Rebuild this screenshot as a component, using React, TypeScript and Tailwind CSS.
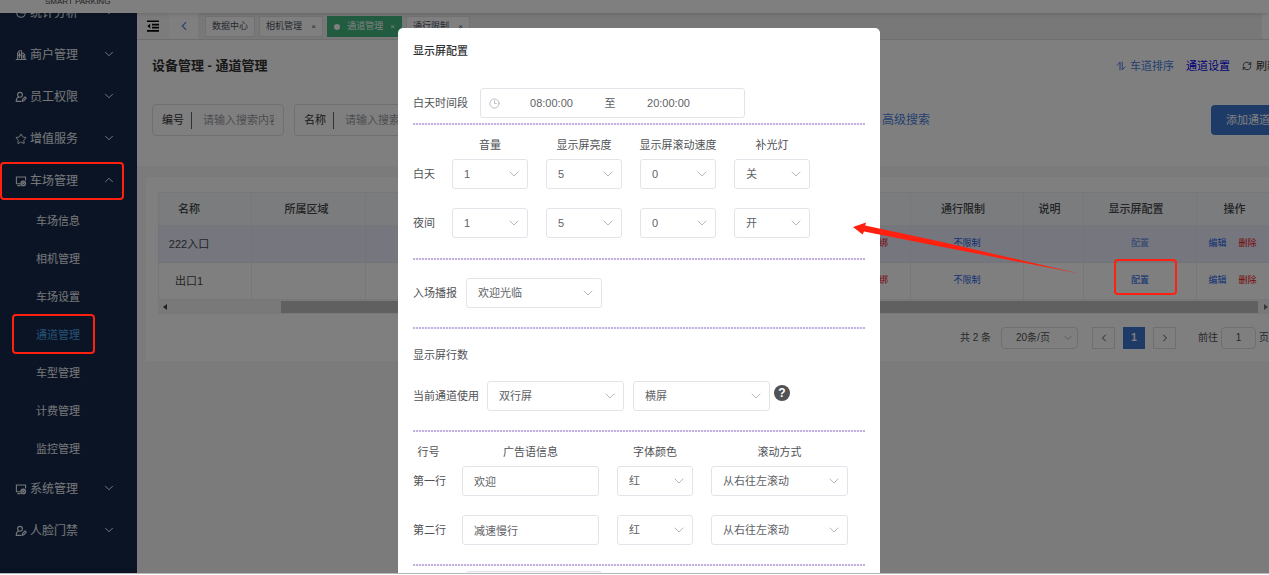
import { ChevronDown, ChevronLeft, ChevronRight, ChevronUp, Clock3, RefreshCw, Star } from 'lucide-react';
import React from 'react';

const iconProps = {
  className: 'size-3 shrink-0',
  viewBox: '0 0 12 12',
  fill: 'none',
  stroke: 'currentColor',
  strokeWidth: 1.1,
  strokeLinejoin: 'round' as const,
  strokeLinecap: 'round' as const,
};

const StatsIcon = () => (
  <svg {...iconProps}>
    <circle cx="6" cy="6" r="4.3" />
    <path d="M6 1.7V6h4.3" />
  </svg>
);

const ShopIcon = () => (
  <svg {...iconProps}>
    <path d="M2.6 10V4L4.4 1.8h2.2V10M6.6 4.2h1.6l1.6 1.6V10M1.2 10.5h9.8" />
    <path d="M4.5 4v4.6M3.6 6.2h2M8.3 6.4v2.4" strokeWidth="1.3" />
  </svg>
);

const StaffIcon = () => (
  <svg {...iconProps}>
    <circle cx="5" cy="3.8" r="2.4" />
    <path d="M3.6 6C1.8 6.6 1.2 8 1.2 10.4h4.6M7.2 10.4l.3-1.8L10 5.9l1.2 1.2-2.5 2.7z" />
  </svg>
);

const MonitorIcon = () => (
  <svg {...iconProps}>
    <path d="M5 8.8H1.4V2h9.2v3M2.8 10.6H5" />
    <circle cx="8.2" cy="8.4" r="2.2" strokeWidth="1.4" />
    <circle cx="8.2" cy="8.4" r=".6" />
  </svg>
);

const StarIcon = () => <Star className="size-3 shrink-0" strokeWidth={2} />;

const menu = [
  { label: '统计分析', icon: StatsIcon },
  { label: '商户管理', icon: ShopIcon },
  { label: '员工权限', icon: StaffIcon },
  { label: '增值服务', icon: StarIcon },
  {
    label: '车场管理',
    icon: MonitorIcon,
    children: ['车场信息', '相机管理', '车场设置', '通道管理', '车型管理', '计费管理', '监控管理'],
  },
  { label: '系统管理', icon: MonitorIcon },
  { label: '人脸门禁', icon: StaffIcon },
];

const Sidebar = () => (
  <aside className="w-[137px] shrink-0 overflow-hidden bg-[#16294b] text-[#eceef2]">
    <nav className="-mt-[21px]">
      {menu.map(({ label, icon: Icon, children }) => (
        <div key={label}>
          <a className="relative flex h-[42px] items-center pl-[15px] pr-[21px] text-xs" href="#">
            <Icon />
            <span className="ml-[3px] flex-1">{label}</span>
            {children ? (
              <ChevronUp className="mb-0.5 size-3.5" strokeWidth={1.7} />
            ) : (
              <ChevronDown className="mb-0.5 size-3.5" strokeWidth={1.7} />
            )}
            {children && (
              <span className="absolute inset-y-0.5 left-0 right-[13px] z-20 rounded-sm border-2 border-[#ff2010]" />
            )}
          </a>
          {children?.map((child) => (
            <a
              key={child}
              className={
                child === '通道管理'
                  ? 'relative flex h-[38px] items-center pl-9 text-[11px] text-[#4da3e6]'
                  : 'flex h-[38px] items-center pl-9 text-[11px]'
              }
              href="#"
            >
              {child}
              {child === '通道管理' && (
                <span className="absolute -top-0.5 bottom-0 left-3 right-[42px] z-20 rounded-sm border-2 border-[#ff2010]" />
              )}
            </a>
          ))}
        </div>
      ))}
    </nav>
  </aside>
);

const TabsBar = () => (
  <div className="flex h-[27px] shrink-0 items-stretch border-b border-[#dcdcdc] bg-[#f0f0f0] text-[#495060]">
    <button aria-label="折叠菜单" className="flex w-8 items-center justify-center bg-[#f8f8f8] text-black">
      <svg className="size-3" fill="none" stroke="currentColor" strokeWidth="1.6" viewBox="0 0 12 12">
        <path d="M0 1.2h12M5 4.6h7M5 7.6h7M0 10.9h12" />
        <path d="M3.2 3.8v4.6L.4 6.1z" fill="currentColor" stroke="none" />
      </svg>
    </button>
    <button aria-label="向左" className="flex w-[29px] items-center justify-center bg-white text-[#5a8be0]">
      <ChevronLeft className="size-3.5" strokeWidth={2} />
    </button>
    <div className="ml-[7px] flex flex-1 items-center gap-1 pt-px text-[9px]">
      <a className="flex h-[21px] w-[50px] items-center justify-center border border-[#e4e4e4] bg-white" href="#">
        数据中心
      </a>
      <a className="flex h-[21px] w-16 items-center justify-between border border-[#e4e4e4] bg-white px-1.5" href="#">
        相机管理<span className="text-[8px]">×</span>
      </a>
      <a className="flex h-[21px] w-[75px] items-center justify-between bg-[#42b983] px-[7px] text-white" href="#">
        <span className="size-1.5 rounded-full bg-white" />
        通道管理<span className="text-[8px]">×</span>
      </a>
      <a className="flex h-[21px] w-16 items-center justify-between border border-[#e4e4e4] bg-white px-1.5" href="#">
        通行限制<span className="text-[8px]">×</span>
      </a>
    </div>
    <div className="w-[7px] bg-white" />
  </div>
);

const SearchBox = ({ label }: { label: string }) => (
  <label className="flex h-8 w-[132px] items-center rounded border border-[#dcdfe6] px-[9px] text-[11px] text-[#303133]">
    <span className="shrink-0">{label}</span>
    <span className="mx-[7px] h-[17px] w-px shrink-0 bg-[#606266]" />
    <input className="ml-1 w-full min-w-0 placeholder:text-[#9a9da3]" placeholder="请输入搜索内容" type="text" />
  </label>
);

const rows = [
  { name: '222入口', active: true },
  { name: '出口1', active: false },
];

const ChannelTable = () => (
  <table className="w-full table-fixed border-collapse text-[11px] text-[#45484d]">
    <colgroup>
      <col className="w-[93px]" />
      <col className="w-[114px]" />
      <col />
      <col className="w-[113px]" />
      <col className="w-[60px]" />
      <col className="w-[113px]" />
      <col className="w-[92px]" />
    </colgroup>
    <thead>
      <tr className="h-[33px] bg-[#f7f8fa] [&>th]:border [&>th]:border-[#ebeef5] [&>th]:font-medium">
        <th className="pr-8">名称</th>
        <th className="pr-1">所属区域</th>
        <th />
        <th className="pr-2">通行限制</th>
        <th className="pr-2">说明</th>
        <th className="pr-2">显示屏配置</th>
        <th className="pr-4">操作</th>
      </tr>
    </thead>
    <tbody>
      {rows.map((row) => (
        <tr
          key={row.name}
          className={
            row.active
              ? 'h-[37px] bg-[#ebedfc] text-center [&>td]:border [&>td]:border-[#e3e6f2]'
              : 'h-[37px] text-center [&>td]:border [&>td]:border-[#ebeef5]'
          }
        >
          <td className="pr-8">{row.name}</td>
          <td />
          <td className="pr-[22px] text-right text-[9px] text-[#f01010]">
            <a href="#">解绑</a>
          </td>
          <td className="text-[9px] text-[#1a5ce6]">
            <a href="#">不限制</a>
          </td>
          <td />
          <td className={row.active ? 'text-[9px] text-[#5a8ae0]' : 'relative text-[9px] text-[#1a5ce6]'}>
            <a href="#">配置</a>
            {!row.active && (
              <span className="absolute -top-1 bottom-1 left-[30px] right-[19px] z-20 rounded-sm border-2 border-[#ff2010]" />
            )}
          </td>
          <td className="pr-5 text-[9px]">
            <a className="text-[#1a5ce6]" href="#">
              编辑
            </a>
            <a className="ml-3 text-[#f01010]" href="#">
              删除
            </a>
          </td>
        </tr>
      ))}
    </tbody>
  </table>
);

const ScrollBar = () => (
  <div className="flex h-3.5 items-center bg-[#f3f3f3] pr-[21px] text-[#404040]">
    <span className="ml-[5px] border-y-[3px] border-r-4 border-y-transparent border-r-current" />
    <span className="ml-[114px] h-3 flex-1 bg-[#c1c1c1]" />
    <span className="ml-1.5 border-y-[3px] border-l-4 border-y-transparent border-l-current text-[#707070]" />
  </div>
);

const Pagination = () => (
  <div className="flex h-[47px] items-center justify-end pr-5 text-[10px] text-[#505256]">
    <span>共 2 条</span>
    <div className="relative ml-2.5 h-[22px] w-[77px]">
      <select aria-label="每页条数" className="size-full appearance-none rounded-sm border border-[#dcdfe6] pl-3.5">
        <option>20条/页</option>
      </select>
      <ChevronDown className="pointer-events-none absolute right-1 top-[5px] size-3 text-[#a0a3a9]" strokeWidth={1.5} />
    </div>
    <button aria-label="上一页" className="ml-3.5 flex h-[22px] w-[23px] items-center justify-center border border-[#dcdfe6]">
      <ChevronLeft className="size-3" />
    </button>
    <button className="ml-2 h-[22px] w-[22px] bg-[#3c77d0] font-bold text-white">1</button>
    <button aria-label="下一页" className="ml-2 flex h-[22px] w-[23px] items-center justify-center border border-[#dcdfe6]">
      <ChevronRight className="size-3" />
    </button>
    <label className="ml-[22px] flex items-center gap-[3px]">
      前往
      <input className="h-[22px] w-[35px] rounded-sm border border-[#dcdfe6] text-center" defaultValue="1" />页
    </label>
  </div>
);

const ChannelPage = () => (
  <main className="flex-1 overflow-hidden bg-[#f6f6f6]">
    {/* the page is a little wider than its frame and runs off to the right */}
    <div className="w-[calc(100%+20px)]">
      <section className="h-[126px] bg-white pl-[15px]">
        <div className="flex h-[52px] items-center justify-between pr-[11px] text-[11px]">
          <h1 className="text-[13px] font-bold text-[#303133]">设备管理 - 通道管理</h1>
          <div className="flex items-center gap-3">
            <a className="flex items-center gap-1 text-[#4a7fe0]" href="#">
              <svg className="size-2.5" fill="none" stroke="currentColor" viewBox="0 0 10 10">
                <path d="M4 9.4V1L1 4.4M6.2.6V9L9.2 5.6" />
              </svg>
              车道排序
            </a>
            <a className="text-[#0000ee]" href="#">
              通道设置
            </a>
            <button className="flex items-center gap-1 text-[#303133]">
              <RefreshCw className="size-2.5" />
              刷新
            </button>
          </div>
        </div>
        <div className="mt-3 flex items-center">
          <SearchBox label="编号" />
          <div className="ml-2.5">
            <SearchBox label="名称" />
          </div>
          <a className="ml-[456px] text-xs text-[#4a7fe0]" href="#">
            高级搜索
          </a>
          <button className="ml-auto h-[30px] w-[78px] rounded-sm bg-[#3c77d0] pl-[15px] text-left text-[11px] text-white">
            添加通道
          </button>
        </div>
      </section>
      <section className="ml-[9px] mt-[11px] bg-white pl-3 pt-[15px]">
        <ChannelTable />
        <ScrollBar />
        <Pagination />
      </section>
    </div>
  </main>
);

const Select = ({ value, label, className }: { value: string; label: string; className?: string }) => (
  <div className={className ? `relative h-[30px] ${className}` : 'relative h-[30px]'}>
    <select
      aria-label={label}
      className="size-full appearance-none rounded-[3px] border border-[#e2e4ea] bg-white pl-[11px] text-[11px] text-[#606266]"
      defaultValue={value}
    >
      <option>{value}</option>
    </select>
    <ChevronDown
      className="pointer-events-none absolute right-1.5 top-[7px] size-4 text-[#b4b8c0]"
      strokeWidth={1.5}
    />
  </div>
);

const Divider = () => (
  <hr className="h-0.5 border-0 bg-[repeating-linear-gradient(90deg,#c4b3e0_0_2px,#f4f1fa_2px_3px)]" />
);

const lamps = [
  { label: '白天', values: ['1', '5', '0', '关'] },
  { label: '夜间', values: ['1', '5', '0', '开'] },
];
const lampTitles = ['音量', '显示屏亮度', '显示屏滚动速度', '补光灯'];

const adLines = [
  { label: '第一行', text: '欢迎' },
  { label: '第二行', text: '减速慢行' },
];

const DisplayDialog = () => (
  <div
    aria-label="显示屏配置"
    className="w-[38%] min-w-[482px] shrink-0 rounded-[5px] bg-white px-[15px] text-[11px] text-[#505256]"
    role="dialog"
  >
    <h2 className="flex h-11 items-center pt-0.5 font-medium text-[#303133]">显示屏配置</h2>
    <div className="mb-[5px] mt-4 flex items-center">
      <span className="w-[67px]">白天时间段</span>
      <div className="flex h-[30px] w-[265px] items-center rounded-[3px] border border-[#e2e4ea] pl-2 text-[#606266]">
        <Clock3 className="size-[11px] text-[#b4b8c0]" />
        <input aria-label="开始时间" className="ml-1.5 w-[91px] text-center" defaultValue="08:00:00" />
        <span className="w-[26px] text-center">至</span>
        <input aria-label="结束时间" className="w-[91px] text-center" defaultValue="20:00:00" />
      </div>
    </div>
    <Divider />

    <div className="mb-5 mt-2.5 grid grid-cols-[21px_repeat(4,76px)] gap-x-[18px] whitespace-nowrap">
      <span />
      {lampTitles.map((title) => (
        <span key={title} className="flex h-6 justify-center pt-0.5">
          {title}
        </span>
      ))}
      {lamps.map((lamp, i) => (
        <React.Fragment key={lamp.label}>
          <span className={i > 0 ? 'mt-[19px] flex items-center' : 'flex items-center'}>{lamp.label}</span>
          {lamp.values.map((value, n) => (
            <Select
              key={lampTitles[n]}
              className={i > 0 ? 'mt-[19px]' : ''}
              label={`${lamp.label}${lampTitles[n]}`}
              value={value}
            />
          ))}
        </React.Fragment>
      ))}
    </div>
    <Divider />

    <div className="mb-[19px] mt-[18px] flex items-center">
      <span className="w-[53px]">入场播报</span>
      <Select className="w-[136px]" label="入场播报" value="欢迎光临" />
    </div>
    <Divider />

    <h3 className="mt-4 h-5 leading-5">显示屏行数</h3>
    <div className="mb-[19px] mt-4 flex items-center">
      <span className="w-[74px] whitespace-nowrap">当前通道使用</span>
      <Select className="w-[137px]" label="行数" value="双行屏" />
      <Select className="ml-[9px] w-[137px]" label="方向" value="横屏" />
      <button
        aria-label="帮助"
        className="mb-1.5 ml-1 flex size-4 items-center justify-center rounded-full bg-[#505256] text-xs font-bold text-white"
      >
        ?
      </button>
    </div>
    <Divider />

    <div className="mb-[19px] mt-2.5 grid grid-cols-[31px_137px_76px_137px] gap-x-[18px] whitespace-nowrap">
      {['行号', '广告语信息', '字体颜色', '滚动方式'].map((title) => (
        <span key={title} className="flex h-6 justify-center pt-0.5">
          {title}
        </span>
      ))}
      {adLines.map((line, i) => (
        <React.Fragment key={line.label}>
          <span className={i > 0 ? 'mt-[19px] flex items-center' : 'flex items-center'}>{line.label}</span>
          <input
            aria-label={`${line.label}广告语信息`}
            className={
              i > 0
                ? 'mt-[19px] h-[30px] rounded-[3px] border border-[#e2e4ea] px-[11px] text-[#606266]'
                : 'h-[30px] rounded-[3px] border border-[#e2e4ea] px-[11px] text-[#606266]'
            }
            defaultValue={line.text}
          />
          <Select className={i > 0 ? 'mt-[19px]' : ''} label={`${line.label}字体颜色`} value="红" />
          <Select className={i > 0 ? 'mt-[19px]' : ''} label={`${line.label}滚动方式`} value="从右往左滚动" />
        </React.Fragment>
      ))}
    </div>
    <Divider />
    <input
      aria-label="备注"
      className="ml-[53px] mt-[5px] block h-[30px] w-[136px] rounded-[3px] border border-[#e2e4ea] bg-[#f5f5f5]"
    />
  </div>
);

const App = () => {
  return (
    <div className="flex h-screen flex-col overflow-hidden bg-white font-['Liberation_Sans','Noto_Sans_CJK_SC',sans-serif]">
      <div className="relative flex min-h-0 flex-1 flex-col overflow-hidden">
        <header className="z-[1] h-[13px] shrink-0 bg-white pl-[45px] shadow-[0_1px_4px_rgba(0,0,0,0.15)]">
          <p className="-mt-[3px] text-[8px] leading-[9px] text-[#404040]">SMART PARKING</p>
        </header>
        <div className="flex min-h-0 flex-1">
          <Sidebar />
          <div className="flex min-w-0 flex-1 flex-col">
            <TabsBar />
            <ChannelPage />
          </div>
        </div>

        <div className="absolute inset-0 z-10 flex items-start justify-center overflow-hidden bg-black/50 pl-[9px] pt-7">
          <DisplayDialog />
        </div>

        <svg className="absolute left-[853px] top-[222px] z-20 h-[53px] w-[226px]" fill="#ff2010" viewBox="0 0 226 53">
          <path d="M0 5 13 .6 12.2 3.4 87 19.6 226 51.6 87 24.4 11 9.6 9.6 12.4z" />
        </svg>
      </div>
      <div className="h-0.5 shrink-0 border-t border-[#b8b8b8]" />
    </div>
  );
};

export default App;
